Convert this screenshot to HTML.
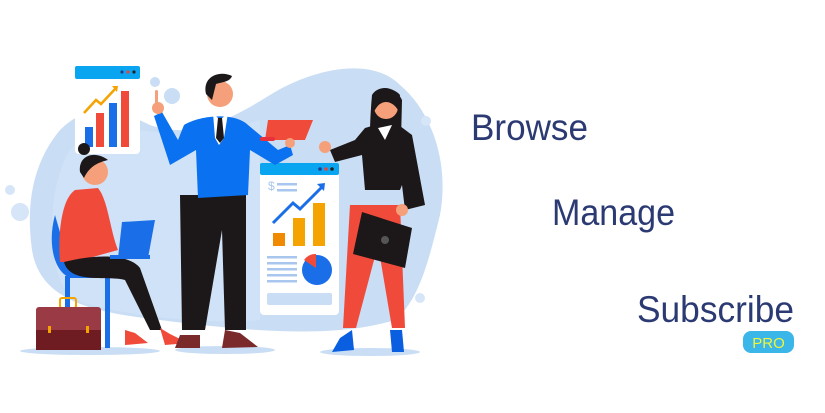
<!DOCTYPE html>
<html><head><meta charset="utf-8"><style>
html,body{margin:0;padding:0;background:#fff;width:825px;height:413px;overflow:hidden}
svg{display:block}
</style></head><body>
<svg width="825" height="413" viewBox="0 0 825 413" xmlns="http://www.w3.org/2000/svg">
<!-- blob -->
<path d="M60 130 C90 100 120 110 150 125 C190 140 230 120 270 95 C310 70 370 55 400 85 C430 110 450 160 440 215 C430 255 420 300 395 320 C330 340 240 330 160 320 C90 312 40 300 32 250 C25 200 35 160 60 130Z" fill="#c9ddf4"/>
<path d="M70 150 C100 120 150 130 200 140 L260 120 L260 320 C200 325 120 315 75 300 C45 280 45 190 70 150Z" fill="#d6e6f8" opacity=".6"/>
<circle cx="155" cy="82" r="5" fill="#c9ddf4"/><circle cx="172" cy="96" r="8" fill="#c9ddf4"/>
<circle cx="10" cy="190" r="5" fill="#d6e6f8"/><circle cx="20" cy="212" r="9" fill="#d6e6f8"/>
<circle cx="426" cy="121" r="5" fill="#d6e6f8"/><circle cx="420" cy="298" r="5" fill="#d6e6f8"/>
<!-- ground shadows -->
<ellipse cx="90" cy="351" rx="70" ry="4" fill="#c9ddf4"/>
<ellipse cx="225" cy="350" rx="50" ry="4" fill="#c9ddf4"/>
<ellipse cx="370" cy="352" rx="50" ry="4" fill="#c9ddf4"/>
<!-- left chart card -->
<rect x="75" y="66" width="65" height="88" rx="4" fill="#fff"/>
<rect x="75" y="66" width="65" height="13" rx="2" fill="#0aa5f0"/>
<circle cx="122" cy="72" r="1.6" fill="#1f3d8c"/><circle cx="128" cy="72" r="1.6" fill="#e8443a"/><circle cx="134" cy="72" r="1.6" fill="#222"/>
<rect x="85" y="127" width="8" height="20" fill="#1a6fe8"/>
<rect x="96" y="113" width="8" height="34" fill="#f04a3a"/>
<rect x="109" y="103" width="8" height="44" fill="#1a6fe8"/>
<rect x="121" y="91" width="8" height="56" fill="#f04a3a"/>
<path d="M84 113 L96 100 L101 104 L116 88" stroke="#f5a300" stroke-width="2.5" fill="none"/>
<path d="M112 86 L118 86 L117 92Z" fill="#f5a300"/>
<!-- right card -->
<rect x="260" y="163" width="79" height="152" rx="4" fill="#fff"/>
<rect x="260" y="163" width="79" height="12" rx="2" fill="#0aa5f0"/>
<circle cx="320" cy="169" r="1.8" fill="#1f3d8c"/><circle cx="326" cy="169" r="1.8" fill="#e8443a"/><circle cx="332" cy="169" r="1.8" fill="#222"/>
<text x="268" y="190" font-family="Liberation Sans" font-size="12" fill="#a8c6ee">$</text>
<rect x="277" y="183" width="20" height="2.5" fill="#a8c6ee"/><rect x="277" y="189" width="20" height="2.5" fill="#a8c6ee"/>
<path d="M273 223 L293 203 L300 209 L322 187" stroke="#1a6fe8" stroke-width="3" fill="none"/>
<path d="M317 184 L325 183 L324 191Z" fill="#1a6fe8"/>
<rect x="273" y="233" width="12" height="13" fill="#f08a00"/>
<rect x="293" y="218" width="12" height="28" fill="#f5a300"/>
<rect x="313" y="203" width="12" height="43" fill="#f5a300"/>
<rect x="267" y="256" width="30" height="2.5" fill="#a8c6ee"/><rect x="267" y="262" width="30" height="2.5" fill="#a8c6ee"/><rect x="267" y="268" width="30" height="2.5" fill="#a8c6ee"/><rect x="267" y="274" width="30" height="2.5" fill="#a8c6ee"/><rect x="267" y="280" width="30" height="2.5" fill="#a8c6ee"/>
<circle cx="317" cy="270" r="15" fill="#1a6fe8"/>
<path d="M316 268 L316 254 A14 14 0 0 0 304 260Z" fill="#f04a3a"/>
<rect x="267" y="293" width="65" height="12" rx="2" fill="#c9ddf4"/>
<!-- seated woman chair -->
<path d="M55 215 C48 240 52 270 70 278 L110 278 L108 262 L68 260 Z" fill="#1a6fe8"/>
<rect x="65" y="276" width="5" height="40" fill="#1a6fe8"/><rect x="105" y="276" width="5" height="72" fill="#1a6fe8"/>
<!-- woman seated body -->
<path d="M60 262 C58 240 60 200 75 190 L98 188 C108 200 110 230 118 250 L100 255 L75 262Z" fill="#f04a3a"/>
<path d="M64 262 C70 285 110 275 125 280 L150 330 L162 330 L140 268 C130 255 100 253 64 262Z" fill="#1c1718"/>
<path d="M125 330 L135 333 L148 343 L125 345 Z" fill="#f04a3a"/>
<path d="M160 328 L170 334 L188 343 L165 345 Z" fill="#f04a3a"/>
<circle cx="95" cy="172" r="13" fill="#f5a07a"/>
<path d="M80 172 C78 155 95 150 108 160 C100 162 90 165 84 178Z" fill="#1c1718"/>
<circle cx="84" cy="149" r="6" fill="#1c1718"/>
<path d="M122 222 L155 220 L148 258 L118 258Z" fill="#1a6fe8"/>
<rect x="110" y="255" width="40" height="4" fill="#1a6fe8"/>
<!-- briefcase -->
<rect x="60" y="298" width="16" height="10" rx="2" fill="none" stroke="#f5a300" stroke-width="2"/>
<rect x="36" y="307" width="65" height="43" rx="3" fill="#9a3a44"/>
<rect x="36" y="330" width="65" height="20" fill="#6e1c22"/>
<rect x="48" y="326" width="3" height="7" fill="#f5a300"/><rect x="86" y="326" width="3" height="7" fill="#f5a300"/>
<!-- man -->
<path d="M180 195 L246 195 L246 330 L225 330 L222 230 L205 330 L182 330 Z" fill="#1c1718"/>
<path d="M180 335 L200 335 L200 348 L175 348Z" fill="#7a2a2a"/><path d="M225 330 L240 333 L258 347 L222 348Z" fill="#7a2a2a"/>
<path d="M184 125 C200 115 235 112 248 125 L278 150 L290 145 L293 155 L275 165 L250 150 L248 195 L198 198 L196 150 L170 165 L154 116 L162 112 L178 140 Z" fill="#0a72f0"/>
<path d="M213 113 L220 120 L228 113 L224 138 L219 145 L215 138Z" fill="#fff"/><path d="M218 118 L222 118 L224 138 L220 143 L216 138Z" fill="#1c1718"/>
<circle cx="158" cy="108" r="6" fill="#f5a07a"/><rect x="155" y="90" width="3" height="14" rx="1.5" fill="#f5a07a"/>
<circle cx="220" cy="94" r="13" fill="#f5a07a"/>
<path d="M206 94 C202 76 220 70 232 76 C230 82 222 82 216 84 L212 100Z" fill="#1c1718"/>
<path d="M268 120 L313 120 L305 140 L265 140Z" fill="#f04a3a"/><rect x="260" y="137" width="15" height="4" rx="2" fill="#e8303a"/>
<circle cx="290" cy="143" r="5" fill="#f5a07a"/>
<!-- right woman -->
<path d="M350 205 L400 205 L405 328 L392 328 L378 245 L356 328 L343 328 Z" fill="#f04a3a"/>
<path d="M340 338 L352 330 L354 350 L332 352Z" fill="#0a5fe0"/><path d="M390 330 L402 330 L404 352 L392 352Z" fill="#0a5fe0"/>
<path d="M372 95 C368 140 370 170 376 180 L400 180 L402 100 C395 85 378 85 372 95Z" fill="#1c1718"/>
<path d="M365 128 L392 120 L412 135 L425 205 L405 210 L402 185 L400 190 L365 190 L362 155 L335 162 L330 150 L355 140Z" fill="#1c1718"/>
<path d="M378 128 L392 125 L385 140Z" fill="#fff"/>
<circle cx="386" cy="107" r="12" fill="#f5a07a"/>
<path d="M372 105 C370 88 392 85 400 95 L398 110 C392 100 380 98 374 112Z" fill="#1c1718"/>
<circle cx="325" cy="147" r="6" fill="#f5a07a"/>
<path d="M362 212 L412 228 L405 268 L353 254Z" fill="#1c1718"/>
<circle cx="385" cy="240" r="4" fill="#555"/>
<circle cx="402" cy="210" r="6" fill="#f5a07a"/>
<!-- text -->
<g font-family="'Liberation Sans',sans-serif" fill="#2b3a73">
<text x="471" y="140" font-size="37" textLength="117" lengthAdjust="spacingAndGlyphs">Browse</text>
<text x="552" y="225" font-size="37" textLength="123" lengthAdjust="spacingAndGlyphs">Manage</text>
<text x="637" y="322" font-size="37" textLength="157" lengthAdjust="spacingAndGlyphs">Subscribe</text>
</g>
<rect x="743" y="331" width="51" height="22" rx="8" fill="#3bb6e8"/>
<text x="768.5" y="348" font-family="'Liberation Sans',sans-serif" font-size="15" fill="#f2f53a" text-anchor="middle">PRO</text>
</svg>
</body></html>
